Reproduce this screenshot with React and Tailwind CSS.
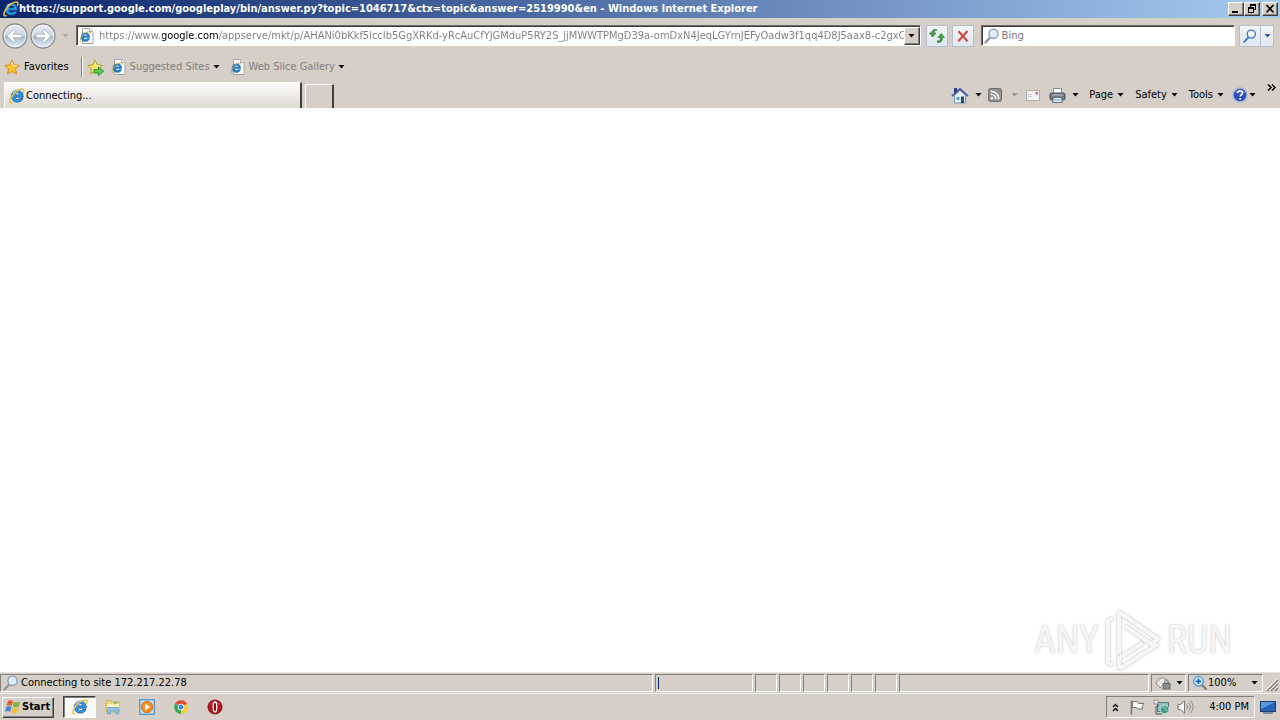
const ADDRESS =
  "https://www.google.com/appserve/mkt/p/AHANi0bKkf5lccIb5GgXRKd-yRcAuCfYJGMduP5RY2S_jjMWWTPMgD39a-omDxN4JeqLGYrnJEFyOadw3f1qq4D8J5aax8-c2gxC'";

const RAISED =
  "bg-[#d5cfc7] border border-t-white border-l-white border-r-[#404040] border-b-[#404040] shadow-[inset_-1px_-1px_0_#808080]";
const SUNKEN = "border border-t-[#808080] border-l-[#808080] border-r-white border-b-white";
const FIELD =
  "bg-white border border-t-[#6f6b66] border-l-[#6f6b66] border-r-white border-b-white shadow-[inset_1px_1px_0_#3c3c3c]";

function IeIcon({ className = "size-4" }) {
  return (
    <svg viewBox="0 0 16 16" className={`${className} shrink-0`} aria-hidden="true">
      <path d="M14.200 9.200H5.700c.1 1.500 1.200 2.400 2.800 2.400 1 0 1.800-.4 2.200-1.100h3.200c-.8 2.300-2.800 3.600-5.600 3.600-3.600 0-5.900-2.300-5.900-5.800 0-3.500 2.500-6.100 5.900-6.100 3.600 0 6 2.600 5.900 7zM5.800 6.900h5.200c-.1-1.300-1.100-2.200-2.600-2.200S6 5.600 5.800 6.900z" fill="#2f9be2" stroke="#0f559f" strokeWidth=".8" />
      <path d="M4.300 5.600C5 3.800 6.500 2.900 8.400 2.900" fill="none" stroke="#a5e0fa" strokeWidth="1.200" />
      <path d="M3 14.800C.2 15.200.2 12.600 2.600 8.700 5.200 4.600 9.800 1 13 .9c2-.1 2.400 1.300 1.500 3.600" fill="none" stroke="#ecc044" strokeWidth="1.500" strokeLinecap="round" />
    </svg>
  );
}

function PageIcon() {
  return (
    <svg viewBox="0 0 16 16" className="size-4 shrink-0" aria-hidden="true">
      <path d="M3.500.5h7l3.500 3v12H3.500z" fill="#fff" stroke="#a3a3a3" />
      <path d="M10.500.5v3H14" fill="#eee" stroke="#b4b4b4" />
      <path d="M10.800 9.600H4.600c.1 1.200.9 1.800 2 1.800.8 0 1.300-.3 1.600-.8h2.400c-.6 1.900-2 2.900-4.100 2.900-2.700 0-4.400-1.700-4.400-4.300S3.900 4.800 6.500 4.800s4.400 1.900 4.300 4.800zM4.700 8h3.700c-.1-.8-.8-1.400-1.800-1.400S4.900 7.200 4.700 8z" fill="#1b7fd0" stroke="#0f559f" strokeWidth=".4" />
      <path d="M1.800 13.800c-1.500-.3-.7-3 1.500-5.700C5.600 5.300 9 3.300 10.800 3.800c.8.300.8 1 .5 1.800" fill="none" stroke="#c9a52e" />
    </svg>
  );
}

function Caret({ className = "text-black" }) {
  return (
    <svg viewBox="0 0 7 4" className={`h-1 w-[7px] shrink-0 ${className}`} aria-hidden="true">
      <path d="M.5 0h6l-3 3.500z" fill="currentColor" />
    </svg>
  );
}

function ArrowButton({ label, flip }) {
  return (
    <button aria-label={label} className="shrink-0">
      <svg viewBox="0 0 26 26" className="size-[26px]" aria-hidden="true">
        <defs>
          <linearGradient id={flip ? "fwd" : "back"} x1="0" y1="0" x2="0" y2="1">
            <stop offset="0" stopColor="#eceff3" />
            <stop offset=".48" stopColor="#cdd5df" />
            <stop offset=".52" stopColor="#a9b8ca" />
            <stop offset="1" stopColor="#e9f2f9" />
          </linearGradient>
        </defs>
        <circle cx="13" cy="13" r="12" fill={`url(#${flip ? "fwd" : "back"})`} stroke="#858e99" strokeWidth="1.300" />
        <circle cx="13" cy="13" r="10.800" fill="none" stroke="#fff" strokeOpacity=".75" />
        <path transform={flip ? "rotate(180 13 13)" : undefined} d="M5 13l6.500-6.500 2 2-2.500 2.700h9v3.600h-9l2.500 2.700-2 2z" fill="#fff" stroke="#8fa0b4" strokeWidth=".7" />
      </svg>
    </button>
  );
}

function Star({ add }) {
  return (
    <svg viewBox="0 0 17 17" className="size-[17px] shrink-0" aria-hidden="true">
      <path d="M8 1.200l2.100 4.700 5.200.5-3.900 3.500 1.100 5.100L8 12.400 3.500 15l1.100-5.100L.8 6.400l5.100-.5z" fill={add ? "#fbe268" : "#fbc534"} stroke={add ? "#b3a022" : "#d98a1c"} />
      <path d="M8 3.200l1.300 3.500 3.500.4" fill="none" stroke="#fff3b5" />
      {add && <path d="M7 10.500h4.500V8l5 4.200-5 4.300v-2.600H7z" fill="#62cf4c" stroke="#23892a" strokeWidth=".9" />}
    </svg>
  );
}

function Lens({ className = "size-4", ring = "#8ea6bd", glass = "#dceefa", handle = "#8d9299" }) {
  return (
    <svg viewBox="0 0 16 16" className={`${className} shrink-0`} aria-hidden="true">
      <path d="M6.200 9.500L1.500 14.500" stroke={handle} strokeWidth="2.200" strokeLinecap="round" />
      <circle cx="9.500" cy="5.800" r="4.600" fill={glass} stroke={ring} strokeWidth="1.500" />
      <path d="M7.200 5.500c.2-1.300 1-2 2.300-2.200" fill="none" stroke="#fff" />
    </svg>
  );
}

function HomeIcon() {
  return (
    <svg viewBox="0 0 18 17" className="h-[17px] w-[18px] shrink-0" aria-hidden="true">
      <path d="M3 1h3v5H3z" fill="#2c3b86" />
      <path d="M3.500 8.500L9 3.500l5.500 5v7.500h-11z" fill="#e7f2fb" stroke="#7c8fab" />
      <path d="M1 9.200L9 1.800l8 7.400" fill="none" stroke="#42559f" strokeWidth="1.700" />
      <path d="M5.500 10h3v3h-3z" fill="#4f9ed8" />
      <path d="M10 9.500h3V16h-3z" fill="#164f82" />
    </svg>
  );
}

function FeedIcon() {
  return (
    <svg viewBox="0 0 14 14" className="size-[14px] shrink-0" aria-hidden="true">
      <rect x=".5" y=".5" width="13" height="13" rx="2" fill="#929292" stroke="#6e6e6e" />
      <circle cx="4" cy="10.300" r="1.300" fill="#fff" />
      <path d="M2.800 6.300c2.800 0 5 2.100 5 5M2.800 3.200c4.500 0 8 3.500 8 8.100" fill="none" stroke="#fff" strokeWidth="1.500" />
    </svg>
  );
}

function MailIcon() {
  return (
    <svg viewBox="0 0 14 11" className="h-[11px] w-[14px] shrink-0" aria-hidden="true">
      <rect x=".5" y=".5" width="13" height="10" fill="#f5f4f5" stroke="#b2adb3" />
      <path d="M2 4.500h4M2 6.500h4" stroke="#cfccd4" />
      <path d="M9.500 2h2.500v2.500H9.500z" fill="#c66b78" />
    </svg>
  );
}

function PrinterIcon() {
  return (
    <svg viewBox="0 0 17 15" className="h-[15px] w-[17px] shrink-0" aria-hidden="true">
      <path d="M4.500.5h8V6h-8z" fill="#fff" stroke="#818b98" />
      <rect x="1" y="5" width="15" height="7" rx="1.500" fill="#747a82" stroke="#474d55" />
      <path d="M3 7h11" stroke="#bcc3ca" />
      <path d="M4.500 9.500h8l1 5h-10z" fill="#e6f1fa" stroke="#66717e" />
      <path d="M5 12h7" stroke="#68a6d6" />
    </svg>
  );
}

function HelpIcon() {
  return (
    <svg viewBox="0 0 16 16" className="size-4 shrink-0" aria-hidden="true">
      <circle cx="8" cy="8" r="7" fill="#264fbb" stroke="#a9b8d8" strokeWidth="1.500" />
      <path d="M3 6c1-4 9-4 10 0-3-1-7-1-10 0z" fill="#7b9ae5" />
      <path d="M5.700 6.200c.1-1.500 1-2.200 2.400-2.200 1.500 0 2.400.8 2.400 2 0 1.700-2.300 1.800-2.300 3.500" fill="none" stroke="#fff" strokeWidth="1.600" />
      <circle cx="8.200" cy="11.900" r="1" fill="#fff" />
    </svg>
  );
}

function Watermark() {
  return (
    <div className="absolute right-12 bottom-0 flex items-center gap-1 font-['Roboto_Condensed','Open_Sans_Condensed','Roboto',sans-serif] text-[38px] leading-[64px] font-normal text-[#f6f6f6] [text-shadow:0_0_2px_#b4b4b4]">
      <span>ANY</span>
      <svg viewBox="0 0 60 64" className="h-16 w-[60px] drop-shadow-[0_0_1px_#b0b0b0]" aria-hidden="true">
        <path d="M10 10L5 13v42l5 2M16 46V4l39 27-7 5-26-18M16 61l39-25M16 61V50l24-15" fill="none" stroke="#f6f6f6" strokeWidth="4" strokeLinejoin="round" />
      </svg>
      <span>RUN</span>
    </div>
  );
}

function TitleBar() {
  return (
    <header className="flex h-[18px] shrink-0 items-center bg-[linear-gradient(90deg,#0b256b,#a6caf0)] pr-[2px] pl-[3px] text-white">
      <IeIcon />
      <h1 className="min-w-0 flex-1 truncate font-bold">
        https://support.google.com/googleplay/bin/answer.py?topic=1046717&amp;ctx=topic&amp;answer=2519990&amp;en - Windows Internet Explorer
      </h1>
      <button aria-label="Minimize" className={`h-[14px] w-4 ${RAISED}`}>
        <svg viewBox="0 0 14 12" className="h-3 w-[14px]"><path d="M3 8h6v2H3z" /></svg>
      </button>
      <button aria-label="Restore" className={`h-[14px] w-4 ${RAISED}`}>
        <svg viewBox="0 0 14 12" className="h-3 w-[14px]" shapeRendering="crispEdges">
          <path d="M5 1h6v6H9V6h1V3H6v1H5zM3 4h6v6H3zm1 2v3h4V6z" fillRule="evenodd" />
        </svg>
      </button>
      <button aria-label="Close" className={`ml-[2px] h-[14px] w-4 ${RAISED}`}>
        <svg viewBox="0 0 14 12" className="h-3 w-[14px]"><path d="M3.500 2l7 7.500M10.500 2l-7 7.500" stroke="#000" strokeWidth="1.700" /></svg>
      </button>
    </header>
  );
}

const GLASS = "flex h-[22px] items-center justify-center border border-[#b6bfcb] bg-[linear-gradient(#f2f5f9,#e0e7ef)]";

function AddressRow() {
  return (
    <div className="flex h-[35px] shrink-0 items-center pr-[6px] pl-[2px]">
      <div className="flex items-center gap-[2px]">
        <ArrowButton label="Back" />
        <ArrowButton label="Forward" flip />
      </div>
      <button aria-label="Recent pages" className="mr-[7px] ml-[6px]">
        <Caret className="text-[#aaa6a1]" />
      </button>
      <div className={`flex h-[21px] min-w-0 flex-1 items-center pl-[2px] ${FIELD}`}>
        <PageIcon />
        <input
          aria-label="Address"
          defaultValue={ADDRESS}
          className="ml-1 min-w-0 flex-1 bg-[linear-gradient(90deg,#7d7d7d_63px,#000_63px,#000_119px,#7d7d7d_119px)] bg-clip-text text-transparent caret-black outline-none"
        />
        <button aria-label="Show address list" className={`mt-px flex h-[18px] w-4 items-center justify-center ${RAISED}`}>
          <Caret />
        </button>
      </div>
      <button aria-label="Refresh" className={`ml-[5px] w-[22px] ${GLASS}`}>
        <svg viewBox="0 0 16 16" className="size-4" aria-hidden="true">
          <path d="M7.500 2.500C5.800 2.300 4.800 3.200 4.700 5H7L3.700 9 .6 5h2c.1-2.600 2-4 4.900-3.500z" fill="#4aa547" stroke="#27762a" strokeWidth=".7" />
          <path d="M8.500 14.500c2.900.3 4.800-1 4.900-3.500V9.500h2L12.300 5.500 9 9.500h2.300V11c-.1 1.300-1.100 2-2.800 1.800z" fill="#4aa547" stroke="#27762a" strokeWidth=".7" />
        </svg>
      </button>
      <button aria-label="Stop" className={`ml-1 w-[22px] ${GLASS}`}>
        <svg viewBox="0 0 16 16" className="size-4" aria-hidden="true">
          <path d="M3.500 3.200l9 10M12.500 3l-9.200 10.200" stroke="#cf4649" strokeWidth="2.200" />
        </svg>
      </button>
      <div className={`ml-[7px] flex h-[21px] w-[20%] items-center pl-[2px] ${FIELD}`}>
        <Lens />
        <input aria-label="Search" placeholder="Bing" className="ml-[2px] min-w-0 flex-1 outline-none placeholder:text-[#777]" />
      </div>
      <button aria-label="Search the web" className={`ml-1 w-[22px] ${GLASS}`}>
        <Lens className="size-[14px]" ring="#3b73c8" glass="#f4f9ff" handle="#3b73c8" />
      </button>
      <button aria-label="Search options" className={`w-[13px] border-l-0 ${GLASS}`}>
        <Caret className="text-[#285dad]" />
      </button>
    </div>
  );
}

function FavoritesRow() {
  return (
    <nav aria-label="Favorites" className="flex h-[29px] shrink-0 items-center pb-px pl-1">
      <button className="flex items-center gap-[3px]">
        <Star />
        Favorites
      </button>
      <span className="ml-[12px] h-5 border-r border-l border-r-white border-l-[#808080]" />
      <button aria-label="Add to Favorites Bar" className="ml-[4px]">
        <Star add />
      </button>
      <a href="#suggested" className="ml-[7px] flex items-center gap-[3px] text-[#808080]">
        <PageIcon />
        Suggested Sites
        <Caret className="text-black" />
      </a>
      <a href="#gallery" className="ml-[10px] flex items-center gap-[3px] text-[#808080]">
        <PageIcon />
        Web Slice Gallery
        <Caret className="text-black" />
      </a>
    </nav>
  );
}

function MenuButton({ children }) {
  return (
    <button className="flex items-center gap-1">
      {children}
      <Caret />
    </button>
  );
}

function TabRow() {
  return (
    <div className="flex h-[26px] shrink-0 items-end pr-1 pl-1">
      <button className="flex h-[26px] w-[298px] items-center gap-px border-t border-r-2 border-l border-t-white border-r-[#404040] border-l-white bg-[linear-gradient(180deg,#fbfbfb,#dedad4)] pl-1">
        <IeIcon />
        Connecting...
      </button>
      <button aria-label="New tab" className="ml-[3px] h-6 w-[29px] border-t border-r-2 border-l border-t-white border-r-[#404040] border-l-white" />
      <div className="ml-auto flex h-full items-center">
        <button aria-label="Home" className="flex items-center gap-[6px]">
          <HomeIcon />
          <Caret />
        </button>
        <button aria-label="Feeds" className="ml-[6px] flex items-center gap-[9px]">
          <FeedIcon />
          <Caret className="text-[#9a9692]" />
        </button>
        <button aria-label="Read mail" className="ml-[8px]">
          <MailIcon />
        </button>
        <button aria-label="Print" className="ml-[9px] flex items-center gap-[6px]">
          <PrinterIcon />
          <Caret />
        </button>
        <div className="ml-[10px] flex gap-[11px]">
          <MenuButton>Page</MenuButton>
          <MenuButton>Safety</MenuButton>
          <MenuButton>Tools</MenuButton>
        </div>
        <button aria-label="Help" className="ml-[8px] flex items-center gap-px">
          <HelpIcon />
          <Caret />
        </button>
        <button aria-label="More commands" className="ml-[11px] self-start pt-[2px]">
          <svg viewBox="0 0 9 7" className="h-[7px] w-[9px]"><path d="M1 .5l3 3-3 3M5 .5l3 3-3 3" fill="none" stroke="#000" strokeWidth="1.500" /></svg>
        </button>
      </div>
    </div>
  );
}

function StatusBar() {
  return (
    <div className="flex h-[21px] shrink-0 items-stretch gap-[2px] border-t border-[#e6e2dc] py-px pr-px">
      <p role="status" className={`flex flex-1 items-center gap-[2px] pl-[2px] ${SUNKEN}`}>
        <Lens />
        Connecting to site 172.217.22.78
      </p>
      <div className={`flex w-[98px] items-center pl-[2px] ${SUNKEN}`}>
        <span className="h-3 w-px bg-[#0a246a]" />
      </div>
      {[1, 2, 3, 4, 5, 6].map((n) => (
        <span key={n} className={`w-[22px] ${SUNKEN}`} />
      ))}
      <span className={`w-[250px] ${SUNKEN}`} />
      <button aria-label="Protected mode" className={`flex w-[35px] items-center justify-center gap-1 ${SUNKEN}`}>
        <svg viewBox="0 0 17 16" className="h-4 w-[17px]" aria-hidden="true">
          <path d="M1 9c0-4 3-7 7-6 2 0 4 2 5 4l-5 2-3 4z" fill="#c9c9c9" stroke="#9c9c9c" />
          <path d="M3 9l5-5M5 11l5-6" stroke="#fff" strokeWidth="1.400" />
          <rect x="8" y="8.500" width="7" height="5.500" fill="#8d8d8d" stroke="#6c6c6c" />
          <path d="M9.500 8.500V6.800c0-2.500 4-2.500 4 0v1.700" fill="none" stroke="#777" />
        </svg>
        <Caret />
      </button>
      <button className={`flex w-[75px] items-center pr-1 pl-[3px] ${SUNKEN}`}>
        <svg viewBox="0 0 16 16" className="size-4 shrink-0" aria-hidden="true">
          <path d="M9.500 9.500l4.500 4.500" stroke="#8c7b5a" strokeWidth="2.200" strokeLinecap="round" />
          <circle cx="6.500" cy="6.300" r="4.800" fill="#dff0fc" stroke="#4a95d8" strokeWidth="1.400" />
          <path d="M6.500 3.500v5.600M3.700 6.300h5.600" stroke="#1361b8" strokeWidth="1.700" />
        </svg>
        100%
        <span className="ml-auto"><Caret /></span>
      </button>
      <svg viewBox="0 0 14 18" className="h-[18px] w-[14px] shrink-0" aria-hidden="true">
        <path d="M2 17L13 6M6 17l7-7M10 17l3-3" stroke="#888078" strokeWidth="1.500" />
        <path d="M1 16L12.500 4.500M5 16l8-8M9 16l4-4" stroke="#fff" />
      </svg>
    </div>
  );
}

function Taskbar() {
  return (
    <footer className="flex h-[27px] shrink-0 items-center border-t border-[#f6f4f1] pr-1 pl-[2px]">
      <button className={`flex h-[21px] w-[52px] items-center gap-px pl-[2px] font-bold ${RAISED}`}>
        <svg viewBox="0 0 16 16" className="size-4 shrink-0" aria-hidden="true">
          <path d="M3 2c2-1 3.500-1 5 .2L6.800 7C5.200 5.900 3.700 6 1.600 6.700z" fill="#e8592b" />
          <path d="M8.900 2.700c1.900 1.100 3.800 1 6.300.1L13.900 7.500c-2.200.9-4.200.9-6.200-.1z" fill="#74b83c" />
          <path d="M1.300 7.900c2.200-.8 3.500-.7 5.200.2l-1.300 4.700C3.400 11.800 2 11.900 0 12.600z" fill="#3f87d5" />
          <path d="M7.500 8.600c2 1 4 1 6.100.1l-1.300 4.700c-2.200.9-4.100.8-6.100-.2z" fill="#f5c02c" />
        </svg>
        Start
      </button>
      <nav aria-label="Pinned programs" className="ml-[9px] flex items-center gap-[18px]">
        <button aria-label="Internet Explorer" className="-mr-[9px] flex h-[22px] w-[33px] items-center justify-center border border-t-[#404040] border-r-white border-b-white border-l-[#404040] bg-[#fbfaf9] shadow-[inset_1px_1px_0_#808080]">
          <IeIcon />
        </button>
        <button aria-label="File Explorer">
          <svg viewBox="0 0 16 16" className="size-4" aria-hidden="true">
            <path d="M1 3l1-1.500h4L7 3h7v10H1z" fill="#efd57f" stroke="#c9a94d" strokeWidth=".7" />
            <path d="M2 5h12v5H2z" fill="#fdf3bb" />
            <path d="M2.500 15V8.500h11V15H11v-3H5.500v3z" fill="#8fc3e8" stroke="#579bcb" strokeWidth=".7" />
            <path d="M9 3h3v1.500H9z" fill="#63b54d" />
          </svg>
        </button>
        <button aria-label="Media Player">
          <svg viewBox="0 0 16 16" className="size-4" aria-hidden="true">
            <rect x=".7" y=".7" width="14.600" height="14.600" fill="#c8e1f6" stroke="#5294cb" strokeWidth="1.300" />
            <circle cx="8" cy="8" r="5.600" fill="#f48b1d" stroke="#dc6d10" />
            <path d="M6.200 4.700v6.600L11.500 8z" fill="#fff" />
          </svg>
        </button>
        <button aria-label="Chrome">
          <svg viewBox="0 0 16 16" className="size-4" aria-hidden="true">
            <path d="M8 8L2.100 4.600A6.800 6.800 0 0 1 13.900 4.600z" fill="#df4937" />
            <path d="M8 8V14.800A6.800 6.800 0 0 1 2.100 4.600z" fill="#35a853" />
            <path d="M8 8l5.900-3.400A6.800 6.800 0 0 1 8 14.800z" fill="#fbcb2e" />
            <path d="M8 4.600h5.900" stroke="#df4937" />
            <circle cx="8" cy="8" r="3.200" fill="#fff" />
            <circle cx="8" cy="8" r="2.500" fill="#4285e8" />
          </svg>
        </button>
        <button aria-label="Opera">
          <svg viewBox="0 0 16 16" className="size-4" aria-hidden="true">
            <circle cx="8" cy="8" r="7" fill="#b41620" stroke="#7e0d16" />
            <path d="M3 5.500c1.500-4 8.500-4 10 0z" fill="#dc5560" opacity=".7" />
            <ellipse cx="8" cy="8" rx="1.800" ry="5" fill="#8b0c15" stroke="#fff" strokeWidth="1.300" />
          </svg>
        </button>
      </nav>
      <div className={`ml-auto flex h-[22px] w-[149px] items-center pr-[5px] pl-[5px] ${SUNKEN}`}>
        <button aria-label="Show hidden icons">
          <svg viewBox="0 0 7 9" className="h-[9px] w-[7px]"><path d="M1 4l2.500-2.500L6 4M1 8l2.500-2.500L6 8" fill="none" stroke="#000" strokeWidth="1.300" /></svg>
        </button>
        <svg viewBox="0 0 16 16" className="ml-[10px] size-4" aria-hidden="true">
          <path d="M2.500 1.500v14" stroke="#777" strokeWidth="1.600" />
          <path d="M3.500 2.500h5l1 2h5.500l-2 3 1 2.500H8.500l-1-1.500h-4z" fill="#fff" stroke="#777" />
        </svg>
        <svg viewBox="0 0 17 16" className="ml-[8px] h-4 w-[17px]" aria-hidden="true">
          <rect x="4.500" y="3.500" width="11" height="9" fill="#8fc1c4" stroke="#66727a" />
          <path d="M1.500 1v4M4.500 1v4M1 4.500h4v3H3V15h6" fill="none" stroke="#555" />
          <path d="M1 1h4v4H1z" fill="#e9e9e9" stroke="#777" strokeWidth=".7" />
          <circle cx="11.500" cy="10.500" r="4.300" fill="#3e9c84" stroke="#d6ece5" strokeWidth=".8" />
          <path d="M9 9c1.500-2 3-1 3 .5s2 1.500 2 2.500" fill="none" stroke="#b8e0ca" />
        </svg>
        <svg viewBox="0 0 17 16" className="ml-[7px] h-4 w-[17px]" aria-hidden="true">
          <path d="M1 5.500h2.500L7.500 2v12l-4-3.500H1z" fill="#f8f8f8" stroke="#777" />
          <path d="M9.500 5.500c1.300 1.500 1.300 3.500 0 5M11.500 3.500c2.400 2.500 2.400 6.500 0 9M13.500 1.800c3.300 3.600 3.300 8.800 0 12.400" fill="none" stroke="#8c8c8c" />
        </svg>
        <time className="ml-auto">4:00 PM</time>
      </div>
      <button aria-label="Show desktop" className="ml-[5px]">
        <svg viewBox="0 0 16 14" className="h-[14px] w-4" aria-hidden="true">
          <rect x=".5" y="1.500" width="15" height="10" fill="#2763b8" stroke="#1b3f76" />
          <path d="M1 2h14L1 9z" fill="#5c98dd" />
          <path d="M3 13h10" stroke="#2b4770" />
        </svg>
      </button>
    </footer>
  );
}

export default function App() {
  return (
    <div className="flex h-screen flex-col overflow-hidden bg-[#d5cfc7] font-['DejaVu_Sans_Condensed','DejaVu_Sans',sans-serif] text-[11px] leading-4 whitespace-nowrap text-black">
      <TitleBar />
      <AddressRow />
      <FavoritesRow />
      <TabRow />
      <main className="relative min-h-0 flex-1 bg-white">
        <Watermark />
      </main>
      <StatusBar />
      <Taskbar />
    </div>
  );
}
